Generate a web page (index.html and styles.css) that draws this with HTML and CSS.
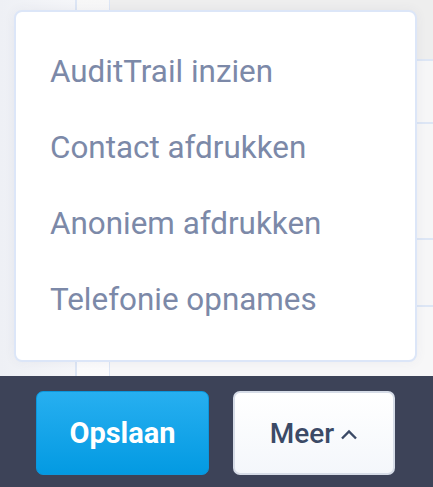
FILE: index.html
```html
<!DOCTYPE html>
<html lang="nl">
<head>
    <meta charset="UTF-8">
    <meta name="viewport" content="width=device-width, initial-scale=1.0">
    <title>Contact acties</title>
    <link rel="stylesheet" href="styles.css">
</head>
<body>
    <div class="page">
        <div class="content">
            <div class="sideCol"></div>
            <div class="mainCol">
                <div class="narrowCol"></div>
                <div class="rows">
                    <div class="row head"></div>
                    <div class="row r1"></div>
                    <div class="row r2"></div>
                    <div class="row r3"></div>
                    <div class="row r4"></div>
                </div>
            </div>

            <ul class="menu">
                <li>AuditTrail inzien</li>
                <li>Contact afdrukken</li>
                <li>Anoniem afdrukken</li>
                <li>Telefonie opnames</li>
            </ul>
        </div>

        <div class="footerBar">
            <button class="btn save" type="button">Opslaan</button>
            <button class="btn more" type="button">
                Meer
                <svg class="caret" width="18" height="11" viewBox="0 0 18 11">
                    <polyline points="2,9.5 9,2.5 16,9.5" fill="none" stroke="#3b4a66" stroke-width="2.4"/>
                </svg>
            </button>
        </div>
    </div>
</body>
</html>
```

FILE: styles.css
```css
body {
    margin: 0;
    font-family: Roboto, "Liberation Sans", sans-serif;
}

.page {
    width: 433px;
    height: 487px;
    display: flex;
    flex-direction: column;
    overflow: hidden;
}

.content {
    position: relative;
    height: 376px;
    display: flex;
}

.sideCol {
    width: 75px;
    background: linear-gradient(to right, #eef0f5, #f5f6f9);
    border-right: 2px solid #dde6f5;
}

.mainCol {
    flex: 1;
    display: flex;
}

.narrowCol {
    width: 32px;
    background: linear-gradient(to bottom, #f7f7f7, #ffffff 40px, #fbfbfc);
    border-right: 1px solid #dde6f5;
}

.rows {
    flex: 1;
    display: flex;
    flex-direction: column;
}

.row {
    border-bottom: 2px solid #dde6f5;
    background: #f6f6f7;
}

.row.head { height: 59px; background: #eeeeee; }
.row.r1 { height: 61px; }
.row.r2 { height: 114px; }
.row.r3 { height: 65px; }
.row.r4 { flex: 1; border-bottom: none; background: #f7f7f8; }

.menu {
    position: absolute;
    left: 14px;
    top: 10px;
    width: 399px;
    margin: 0;
    padding: 22px 0;
    list-style: none;
    background: #ffffff;
    border: 2px solid #dce6f8;
    border-radius: 8px;
    box-shadow: 0 0 12px rgba(60, 70, 100, 0.06);
}

.menu li {
    height: 76px;
    line-height: 76px;
    padding-left: 34px;
    font-size: 31.4px;
    color: #7c89a8;
}

.footerBar {
    flex: 1;
    background: #3d4358;
    display: flex;
    gap: 24px;
    padding: 15px 0 0 36px;
}

.btn {
    height: 84px;
    border-radius: 7px;
    font-family: Roboto, "Liberation Sans", sans-serif;
    cursor: pointer;
}

.save {
    width: 173px;
    font-size: 29px;
    color: #ffffff;
    font-weight: bold;
    background: linear-gradient(to bottom, #27aff0, #039ae2);
    border: 1px solid #0b97dd;
}

.more {
    width: 162px;
    font-size: 28px;
    color: #3b4a66;
    font-weight: 500;
    background: linear-gradient(to bottom, #ffffff, #f4f7fb);
    border: 2px solid #d6dce7;
    display: flex;
    align-items: center;
    justify-content: center;
    gap: 6px;
}

.caret {
    margin-top: 2px;
}
```
